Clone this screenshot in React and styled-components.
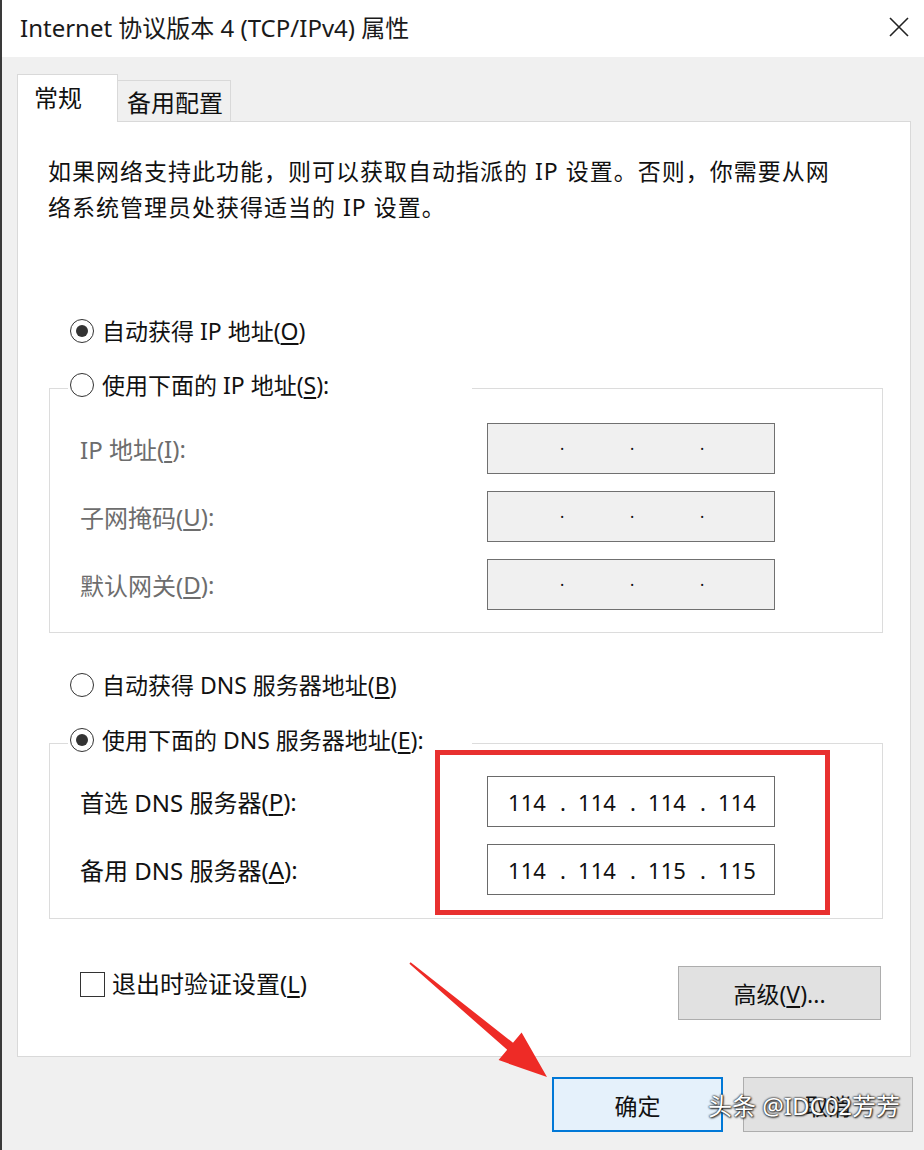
import React from "react"
import styled, { createGlobalStyle } from "styled-components"

const GlobalStyle = createGlobalStyle`
  html, body {
    margin: 0;
    padding: 0;
    background: #f0f0f0;
  }
  body {
    font-family: "Noto Sans", "Noto Sans CJK SC", sans-serif;
    color: #111;
  }
`

const Window = styled.div`
  position: relative;
  width: 924px;
  height: 1150px;
  box-sizing: border-box;
  border-left: 2px solid #3a3a3a;
  background: #f0f0f0;
  display: flex;
  flex-direction: column;
  overflow: hidden;
`

const TitleBar = styled.div`
  height: 57px;
  flex: none;
  background: #fff;
  display: flex;
  align-items: center;
  justify-content: space-between;
  padding: 0 14px 4px 18px;
  box-sizing: border-box;
`

const Title = styled.div`
  font-size: 24px;
  color: #1a1a1a;
`

const Body = styled.div`
  padding: 18px 13px 0 15px;
  display: flex;
  flex-direction: column;
`

const TabStrip = styled.div`
  display: flex;
  align-items: flex-end;
  height: 47px;
  margin-bottom: -1px;
  position: relative;
  z-index: 1;
`

const Tab = styled.div`
  box-sizing: border-box;
  height: ${p => (p.$active ? 48 : 42)}px;
  width: ${p => (p.$active ? 101 : 113)}px;
  padding-left: ${p => (p.$active ? 16 : 9)}px;
  padding-bottom: ${p => (p.$active ? 4 : 0)}px;
  display: flex;
  align-items: center;
  font-size: 24px;
  background: ${p => (p.$active ? "#fff" : "#f0f0f0")};
  border: 1px solid #d9d9d9;
  border-bottom: ${p => (p.$active ? "none" : "1px solid #d9d9d9")};
  border-left: ${p => (p.$active ? "1px solid #d9d9d9" : "none")};
`

const Panel = styled.div`
  background: #fff;
  border: 1px solid #d9d9d9;
  padding: 0 27px 36px 31px;
  display: flex;
  flex-direction: column;
`

const Intro = styled.p`
  margin: 31px 0 0 -1px;
  font-size: 23px;
  line-height: 36px;
  letter-spacing: 1px;
`

const RadioRow = styled.label`
  display: flex;
  align-items: center;
  gap: 8px;
  font-size: 23px;
  line-height: 36px;
  margin-top: ${p => p.$top || 0}px;
  margin-left: 21px;
`

const RadioCircle = styled.span`
  width: 24px;
  height: 24px;
  box-sizing: border-box;
  border: 1.5px solid #333;
  border-radius: 50%;
  background: #fff;
  display: flex;
  align-items: center;
  justify-content: center;
  flex: none;
  &::after {
    content: "";
    width: 12px;
    height: 12px;
    border-radius: 50%;
    background: ${p => (p.$checked ? "#333" : "transparent")};
  }
`

const Mn = styled.u`
  text-decoration-thickness: 1.5px;
  text-underline-offset: 3px;
`

const Group = styled.fieldset`
  margin: ${p => p.$top || 0}px 0 0 0;
  padding: 0 0 ${p => p.$bottom}px 30px;
  border: 1px solid #dcdcdc;
  min-width: 0;
`

const Legend = styled.legend`
  margin-left: -12px;
  width: 404px;
  box-sizing: border-box;
  display: flex;
  align-items: center;
  gap: 8px;
  font-size: 23px;
  line-height: 36px;
  padding: 0 0 6px 2px;
`

const Fields = styled.div`
  display: flex;
  padding-top: ${p => p.$top}px;
`

const LabelCol = styled.div`
  width: 407px;
  display: flex;
  flex-direction: column;
  gap: 17px;
`

const FieldLabel = styled.div`
  height: 51px;
  display: flex;
  align-items: center;
  font-size: 24px;
  color: ${p => (p.$disabled ? "#6d6d6d" : "#111")};
`

const InputCol = styled.div`
  position: relative;
  display: flex;
  flex-direction: column;
  gap: 17px;
`

const IpBox = styled.div`
  width: 288px;
  height: 51px;
  box-sizing: border-box;
  border: 1.5px solid ${p => (p.$disabled ? "#707070" : "#6a6a6a")};
  background: ${p => (p.$disabled ? "#f0f0f0" : "#fff")};
  display: flex;
  align-items: center;
  padding-left: 6px;
  font-size: 22px;
  color: #111;
`

const Octet = styled.span`
  width: 66px;
  text-align: center;
`

const Dot = styled.span`
  width: 4px;
  text-align: center;
  font-size: ${p => (p.$small ? 16 : 22)}px;
`

const Highlight = styled.div`
  position: absolute;
  top: -26px;
  left: -52px;
  right: -55px;
  bottom: -20px;
  border: 5px solid #e8302f;
  pointer-events: none;
`

const BottomRow = styled.div`
  margin-top: 47px;
  display: flex;
  justify-content: space-between;
  align-items: flex-start;
  padding: 0 2px 0 31px;
`

const CheckRow = styled.label`
  display: flex;
  align-items: center;
  gap: 7px;
  font-size: 24px;
  line-height: 36px;
`

const CheckBox = styled.span`
  width: 25px;
  height: 25px;
  box-sizing: border-box;
  border: 1.5px solid #333;
  background: #fff;
`

const Button = styled.button`
  width: ${p => p.$w}px;
  height: ${p => p.$h}px;
  box-sizing: border-box;
  font-family: inherit;
  font-size: 23px;
  color: #111;
  background: ${p => (p.$primary ? "#e5f1fb" : "#e1e1e1")};
  border: ${p => (p.$primary ? "2px solid #0078d7" : "1.5px solid #adadad")};
  padding: 0;
  cursor: default;
`

const Footer = styled.div`
  display: flex;
  justify-content: flex-end;
  gap: 20px;
  padding-top: 20px;
  margin-right: -2px;
`

const Arrow = styled.svg`
  position: absolute;
  left: 398px;
  top: 955px;
  pointer-events: none;
`

const Watermark = styled.div`
  position: absolute;
  left: 706px;
  top: 1087px;
  font-size: 24px;
  color: #fff;
  text-shadow: 0 0 2px #222, 0 0 2px #222, 1px 1px 2px #333;
  pointer-events: none;
  white-space: nowrap;
`

const CloseIcon = () => (
  <svg width="22" height="22" viewBox="0 0 22 22">
    <path d="M2 2 L20 20 M20 2 L2 20" stroke="#222" strokeWidth="1.6" fill="none" />
  </svg>
)

const IpField = ({ value, disabled }) => (
  <IpBox $disabled={disabled}>
    {(value || ["", "", "", ""]).map((o, i) => (
      <React.Fragment key={i}>
        {i > 0 && <Dot $small={!value}>{value ? "." : "·"}</Dot>}
        <Octet>{o}</Octet>
      </React.Fragment>
    ))}
  </IpBox>
)

export default function App() {
  return (
    <>
      <GlobalStyle />
      <Window>
        <TitleBar>
          <Title>Internet 协议版本 4 (TCP/IPv4) 属性</Title>
          <CloseIcon />
        </TitleBar>
        <Body>
          <TabStrip>
            <Tab $active>常规</Tab>
            <Tab>备用配置</Tab>
          </TabStrip>
          <Panel>
            <Intro>
              如果网络支持此功能，则可以获取自动指派的 IP 设置。否则，你需要从网
              <br />
              络系统管理员处获得适当的 IP 设置。
            </Intro>

            <RadioRow $top={88}>
              <RadioCircle $checked />
              <span>
                自动获得 IP 地址(<Mn>O</Mn>)
              </span>
            </RadioRow>

            <Group $top={18} $bottom={22}>
              <Legend>
                <RadioCircle />
                <span>
                  使用下面的 IP 地址(<Mn>S</Mn>):
                </span>
              </Legend>
              <Fields $top={14}>
                <LabelCol>
                  <FieldLabel $disabled>
                    IP 地址(<Mn>I</Mn>):
                  </FieldLabel>
                  <FieldLabel $disabled>
                    子网掩码(<Mn>U</Mn>):
                  </FieldLabel>
                  <FieldLabel $disabled>
                    默认网关(<Mn>D</Mn>):
                  </FieldLabel>
                </LabelCol>
                <InputCol>
                  <IpField disabled />
                  <IpField disabled />
                  <IpField disabled />
                </InputCol>
              </Fields>
            </Group>

            <RadioRow $top={34}>
              <RadioCircle />
              <span>
                自动获得 DNS 服务器地址(<Mn>B</Mn>)
              </span>
            </RadioRow>

            <Group $top={19} $bottom={23}>
              <Legend>
                <RadioCircle $checked />
                <span>
                  使用下面的 DNS 服务器地址(<Mn>E</Mn>):
                </span>
              </Legend>
              <Fields $top={12}>
                <LabelCol>
                  <FieldLabel>
                    首选 DNS 服务器(<Mn>P</Mn>):
                  </FieldLabel>
                  <FieldLabel>
                    备用 DNS 服务器(<Mn>A</Mn>):
                  </FieldLabel>
                </LabelCol>
                <InputCol>
                  <IpField value={["114", "114", "114", "114"]} />
                  <IpField value={["114", "114", "115", "115"]} />
                  <Highlight />
                </InputCol>
              </Fields>
            </Group>

            <BottomRow>
              <CheckRow>
                <CheckBox />
                <span>
                  退出时验证设置(<Mn>L</Mn>)
                </span>
              </CheckRow>
              <Button $w={203} $h={54}>
                高级(<Mn>V</Mn>)...
              </Button>
            </BottomRow>
          </Panel>
          <Footer>
            <Button $primary $w={171} $h={55}>
              确定
            </Button>
            <Button $w={170} $h={55}>
              取消
            </Button>
          </Footer>
        </Body>
        <Arrow width="150" height="125" viewBox="0 0 150 125">
          <polygon
            points="10.6,7.2 113,87.8 121.6,77.5 147,122 98.6,105.1 107.2,94.8 9.4,8.8"
            fill="#ee2b26"
          />
        </Arrow>
        <Watermark>头条 @IDC02芳芳</Watermark>
      </Window>
    </>
  )
}
